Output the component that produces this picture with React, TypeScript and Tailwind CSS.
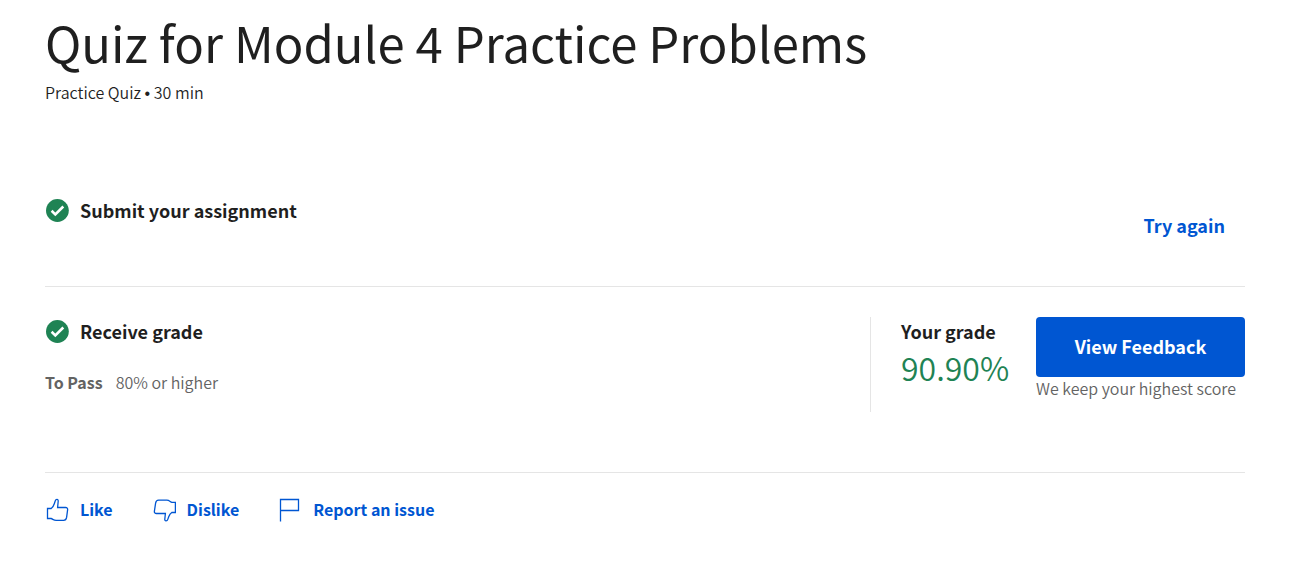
import type { ReactNode } from "react";

function CheckBadge() {
  return (
    <svg width="24" height="24" viewBox="0 0 24 24" aria-hidden="true" className="shrink-0">
      <circle cx="12.4" cy="11.5" r="11.4" fill="#1f8354" />
      <path d="M6.6 11.8l3.7 3.6 8-7.9" fill="none" stroke="#fff" strokeWidth="2.6" />
    </svg>
  );
}

function LikeIcon() {
  return (
    <svg width="24" height="24" viewBox="0 0 24 24" aria-hidden="true" fill="none" stroke="#0056d2" strokeWidth="1.3">
      <path d="M2.5 10.5H6.2C7.6 9.6 8.6 8 9.3 5.8L10.2 3C10.9 .8 13.4 1 13.2 3.2L12.6 9.5H20.6C22 9.5 22.8 10.4 22.6 11.8L21.6 19.4C21.3 21.3 20.3 22.4 18.6 22.4H11.2C8.6 22.4 7.8 21 6 20.5H2.5Z" />
    </svg>
  );
}

function DislikeIcon() {
  return (
    <svg width="24" height="24" viewBox="0 0 24 24" aria-hidden="true" fill="none" stroke="#0056d2" strokeWidth="1.3">
      <path d="M23.4 14.5H19.8C18.4 15.4 17.4 17 16.7 18.8L15.8 21.4C15.1 23.6 12.6 23.4 12.8 21.2L13.4 15.5H4.4C3 15.5 2.2 14.6 2.4 13.2L3.6 5.2C3.9 3.3 4.9 2.2 6.6 2.2H14.8C17.4 2.2 18.2 3.9 20 4.4H23.4Z" />
    </svg>
  );
}

function FlagIcon() {
  return (
    <svg width="24" height="24" viewBox="0 0 24 24" aria-hidden="true" fill="none" stroke="#0056d2" strokeWidth="1.3">
      <path d="M2.5 23.5V1.5H20.5V12.5H2.5" />
    </svg>
  );
}

function FeedbackButton({ icon, children }: { icon: ReactNode; children: ReactNode }) {
  return (
    <button type="button" className="flex h-6 items-center gap-[11px] text-base leading-6 font-bold text-[#0056d2]">
      {icon}
      <span className="pb-0.5">{children}</span>
    </button>
  );
}

function StepTitle({ children }: { children: ReactNode }) {
  return (
    <h2 className="flex h-6 items-center gap-[11px] text-lg leading-6 font-bold">
      <CheckBadge />
      <span className="pb-0.5">{children}</span>
    </h2>
  );
}

export default function App() {
  return (
    <main className="bg-white pr-[50px] pl-[45px] font-['Noto_Sans_CJK_SC',sans-serif] text-[#1f1f1f]">
      <header className="pt-[9px]">
        <h1 className="text-[49px] leading-[66px] font-normal">Quiz for Module 4 Practice Problems</h1>
        <p className="pt-[5px] text-base leading-6 font-[350]">
          Practice Quiz <span className="font-['Liberation_Sans',sans-serif]">•</span> 30 min
        </p>
      </header>

      <section className="mt-[93px] flex items-start justify-between border-b border-[#e5e5e5] pb-[47px]">
        <StepTitle>Submit your assignment</StepTitle>
        <button type="button" className="mt-3 px-5 text-lg leading-7 font-bold text-[#0056d2]">
          Try again
        </button>
      </section>

      <section className="flex items-start justify-between border-b border-[#e5e5e5] pt-[30px] pb-[60px]">
        <div className="pt-[3px]">
          <StepTitle>Receive grade</StepTitle>
          <p className="mt-[26px] flex gap-[13px] text-base leading-6 font-[350] text-[#636363]">
            <strong className="font-bold">To Pass</strong>
            <span>80% or higher</span>
          </p>
        </div>
        <div className="flex items-start">
          <div className="h-[95px] w-[166px] border-l border-[#e5e5e5] pt-0.5 pl-[30px]">
            <h3 className="text-lg leading-6 font-bold">Your grade</h3>
            <p className="pt-1 text-[32px] leading-10 font-[350] text-[#1f8354]">90.90%</p>
          </div>
          <div className="w-[209px]">
            <button
              type="button"
              className="h-[60px] w-full rounded-[4px] bg-[#0056d2] pb-0.5 text-lg leading-6 font-bold text-white"
            >
              View Feedback
            </button>
            <p className="text-base leading-[22px] font-[350] whitespace-nowrap text-[#636363]">We keep your highest score</p>
          </div>
        </div>
      </section>

      <footer className="flex gap-[39px] pt-[25px] pb-10">
        <FeedbackButton icon={<LikeIcon />}>Like</FeedbackButton>
        <FeedbackButton icon={<DislikeIcon />}>Dislike</FeedbackButton>
        <FeedbackButton icon={<FlagIcon />}>Report an issue</FeedbackButton>
      </footer>
    </main>
  );
}
